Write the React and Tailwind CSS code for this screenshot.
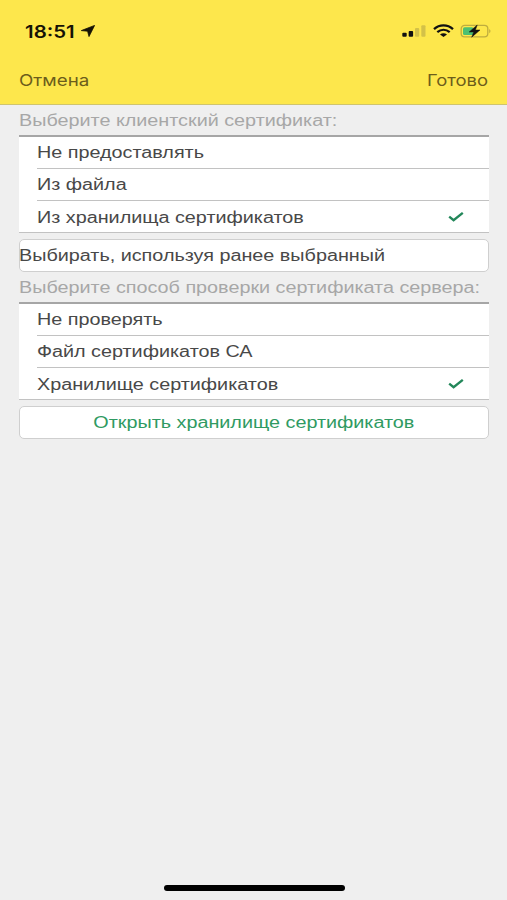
const CLIENT_OPTIONS = [
  { label: 'Не предоставлять' },
  { label: 'Из файла' },
  { label: 'Из хранилища сертификатов', checked: true },
]

const SERVER_OPTIONS = [
  { label: 'Не проверять' },
  { label: 'Файл сертификатов СА' },
  { label: 'Хранилище сертификатов', checked: true },
]

function Check() {
  return (
    <svg className="mr-[25px] h-[11px] w-[16px]" viewBox="0 0 16 11" fill="none">
      <path d="M1.2 4.6 L5.6 8.2 L14.8 0.9" stroke="#23875a" strokeWidth="2.4" />
    </svg>
  )
}

function OptionList({ options }) {
  return (
    <ul className="h-[98px] border-t-2 border-b border-t-[#a6a6a6] border-b-[#c2c2c2] bg-white pl-[18px]">
      {options.map(({ label, checked }, i) => (
        <li
          key={label}
          className={`flex items-center justify-between ${i < 2 ? 'h-[32px] border-b border-[#c2c2c2]' : 'h-[31px] pt-[2px]'}`}
        >
          <span className="origin-left scale-x-[1.236] whitespace-nowrap">{label}</span>
          {checked && <Check />}
        </li>
      ))}
    </ul>
  )
}

function StatusIcons() {
  return (
    <svg className="h-[16px] w-[92px]" viewBox="0 0 92 16">
      {/* signal */}
      <rect x="2.3" y="9.8" width="4.4" height="4" rx="1" fill="#111" />
      <rect x="8.7" y="8" width="4.4" height="5.8" rx="1" fill="#111" />
      <rect x="15" y="5" width="4.2" height="8.8" rx="1" fill="#d3c148" />
      <rect x="21.3" y="2.3" width="4.2" height="11.5" rx="1" fill="#d3c148" />
      {/* wifi */}
      <g fill="none" stroke="#111" strokeWidth="2.3">
        <path d="M34 6.2 C39.5 1.2 47.5 1.2 53 6.2" />
        <path d="M37.3 9.2 C41 6 46 6 49.7 9.2" />
      </g>
      <path d="M40 11.4 Q43.5 9 47 11.4 L43.5 14 Z" fill="#111" />
      {/* battery */}
      <rect x="61.2" y="2.4" width="26.6" height="11.4" rx="3.4" fill="none" stroke="#bfad3f" strokeWidth="1.3" />
      <path d="M89.2 6 Q91.8 8.1 89.2 10.2 Z" fill="#bfad3f" />
      <rect x="63" y="4.2" width="10.5" height="7.8" rx="1.6" fill="#4cc072" />
      <path d="M77.2 2 L69.2 9 H73.7 L71.7 14.2 L80 7 H75.4 Z" fill="#111" stroke="#111" strokeWidth="0.5" />
    </svg>
  )
}

export default function App() {
  return (
    <div className="flex h-[900px] w-[507px] flex-col overflow-hidden bg-[#efefef] font-['Liberation_Sans',sans-serif] text-[16px] leading-[20px] text-[#484848]">
      <header className="flex h-[105px] flex-col border-b border-[#cfc46e] bg-[#fde74c]">
        <div className="flex h-[62px] items-center justify-between pl-[25px] pr-[15px]">
          <div className="flex items-center gap-[4px]">
            <span className="w-[52px] pt-px font-['Inter',sans-serif] text-[17px] font-semibold text-[#151205]">
              <span className="inline-block origin-left scale-x-[1.2]">18:51</span>
            </span>
            <svg className="h-[12px] w-[14px]" viewBox="0 0 14 12">
              <path d="M13.6 0.4 L0.3 5.6 L6.6 6.2 L8 11.6 Z" fill="#151205" stroke="#151205" strokeWidth="0.8" strokeLinejoin="round" />
            </svg>
          </div>
          <StatusIcons />
        </div>
        <div className="flex h-[36px] items-center justify-between px-[18.5px] font-['Inter',sans-serif] text-[16px] text-[#6c5d1b]">
          <button className="origin-left scale-x-[1.17]">Отмена</button>
          <button className="origin-right scale-x-[1.15]">Готово</button>
        </div>
      </header>

      <main className="flex-1 px-[18.5px]">
        <p className="flex h-[30px] items-center pt-[2px] text-[#a7a7a7]">
          <span className="origin-left scale-x-[1.236] whitespace-nowrap">Выберите клиентский сертификат:</span>
        </p>
        <OptionList options={CLIENT_OPTIONS} />
        <button className="mt-[6px] flex h-[33px] w-full items-center rounded-[5px] border border-[#cfcfcf] bg-white">
          <span className="-ml-px origin-left scale-x-[1.236] whitespace-nowrap">Выбирать, используя ранее выбранный</span>
        </button>

        <p className="flex h-[30px] items-center pt-[2px] text-[#a7a7a7]">
          <span className="origin-left scale-x-[1.236] whitespace-nowrap">Выберите способ проверки сертификата сервера:</span>
        </p>
        <OptionList options={SERVER_OPTIONS} />
        <button className="mt-[6px] flex h-[33px] w-full items-center justify-center rounded-[5px] border border-[#cfcfcf] bg-white text-[#2f9a62]">
          <span className="scale-x-[1.236] whitespace-nowrap">Открыть хранилище сертификатов</span>
        </button>
      </main>

      <footer className="flex h-[15px] justify-center pl-px">
        <div className="h-[6px] w-[181px] rounded-full bg-black" />
      </footer>
    </div>
  )
}
